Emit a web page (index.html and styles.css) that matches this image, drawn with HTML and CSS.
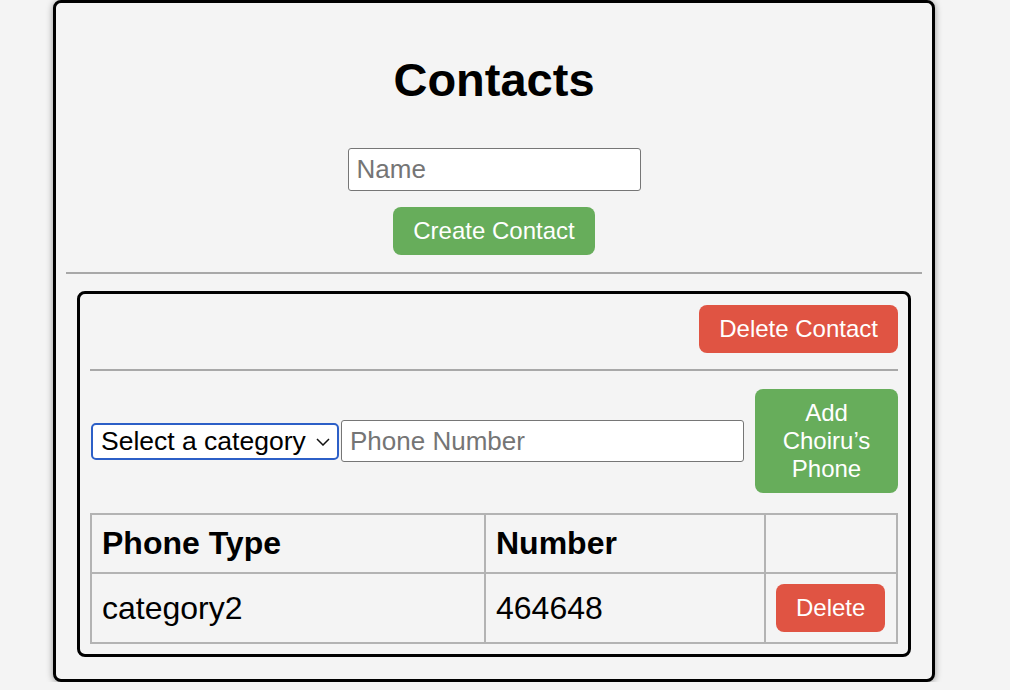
FILE: index.html
```html
<!DOCTYPE html>
<html lang="en">
<head>
<meta charset="utf-8">
<title>Contacts</title>
<link rel="stylesheet" href="styles.css">
</head>
<body>
<div class="page">
  <div class="card">
    <h1 class="title">Contacts</h1>
    <div class="create">
      <input class="text-input name-input" type="text" placeholder="Name">
      <button class="btn btn-green">Create Contact</button>
    </div>
    <hr class="rule">
    <div class="contact">
      <div class="contact-head">
        <button class="btn btn-red">Delete Contact</button>
      </div>
      <hr class="rule rule-inner">
      <div class="phone-row">
        <div class="select-wrap">
          <select class="select">
            <option>Select a category</option>
          </select>
          <svg class="chevron" width="14" height="8" viewBox="0 0 14 8"><path d="M1 1 L7 7 L13 1" fill="none" stroke="#111" stroke-width="1.5"/></svg>
        </div>
        <input class="text-input phone-input" type="text" placeholder="Phone Number">
        <button class="btn btn-green btn-add">Add Choiru’s Phone</button>
      </div>
      <table class="phones">
        <colgroup>
          <col class="col-type">
          <col class="col-num">
          <col>
        </colgroup>
        <thead>
          <tr><th>Phone Type</th><th>Number</th><th></th></tr>
        </thead>
        <tbody>
          <tr><td>category2</td><td>464648</td><td><button class="btn btn-red">Delete</button></td></tr>
        </tbody>
      </table>
    </div>
  </div>
</div>
</body>
</html>
```

FILE: styles.css
```css
* { box-sizing: border-box; }
html, body { margin: 0; padding: 0; background: #f4f4f4; }
body { font-family: "Liberation Sans", Arial, sans-serif; color: #000; }

.page { padding-left: 53px; }

.card {
  width: 882px;
  height: 682px;
  background: #f4f4f4;
  border: 3px solid #000;
  border-radius: 8px;
  padding: 10px;
  box-shadow: 0 1px 7px rgba(0,0,0,0.4);
}

.title {
  margin: 40px 0 41px;
  font-size: 47px;
  font-weight: bold;
  text-align: center;
  line-height: 54px;
}

.create {
  display: flex;
  flex-direction: column;
  align-items: center;
  gap: 16px;
}

.text-input {
  font-family: "Liberation Sans", Arial, sans-serif;
  font-size: 26px;
  line-height: 28px;
  border: 1px solid #767676;
  border-radius: 3px;
  background: #fff;
  color: #000;
  outline: none;
}
.text-input::placeholder { color: #757575; }

.name-input {
  width: 293px;
  height: 43px;
  padding: 6px 8px;
}

.btn {
  font-family: "Liberation Sans", Arial, sans-serif;
  font-size: 24px;
  line-height: 28px;
  color: #fff;
  border: none;
  border-radius: 8px;
  padding: 10px 20px;
  cursor: pointer;
}
.btn-green { background: #67ad5b; }
.btn-red { background: #e05443; }

.rule {
  border: none;
  border-top: 2px solid #a8a8a8;
  margin: 17px 0;
  height: 0;
}
.rule-inner { margin: 16px 0 18px; }

.contact {
  margin: 0 11px 12px;
  border: 3px solid #000;
  border-radius: 8px;
  padding: 11px 10px 10px;
}

.contact-head {
  display: flex;
  justify-content: flex-end;
}

.phone-row {
  display: flex;
  align-items: center;
  margin-bottom: 20px;
}

.select-wrap {
  position: relative;
  margin: 0 2px 0 1px;
}

.select {
  appearance: none;
  -webkit-appearance: none;
  width: 248px;
  height: 37px;
  border: 2px solid #2c5fc7;
  border-radius: 5px;
  background: #fff;
  font-family: "Liberation Sans", Arial, sans-serif;
  font-size: 26.5px;
  line-height: 28px;
  color: #000;
  padding: 0 24px 0 8px;
  outline: none;
  display: block;
}

.chevron {
  position: absolute;
  left: 225px;
  top: 15px;
  pointer-events: none;
}

.phone-input {
  flex: 1;
  height: 42px;
  padding: 6px 8px;
}

.btn-add {
  width: 143px;
  margin-left: 11px;
  padding: 10px 20px;
}

.phones {
  width: 100%;
  border-collapse: collapse;
  table-layout: fixed;
  font-size: 32px;
}
.col-type { width: 394px; }
.col-num { width: 280px; }

.phones th, .phones td {
  border: 2px solid #b3b3b3;
  padding: 10px;
  text-align: left;
  line-height: 37px;
  vertical-align: middle;
}
.phones th { font-weight: bold; }
.phones td .btn { display: block; }
```
